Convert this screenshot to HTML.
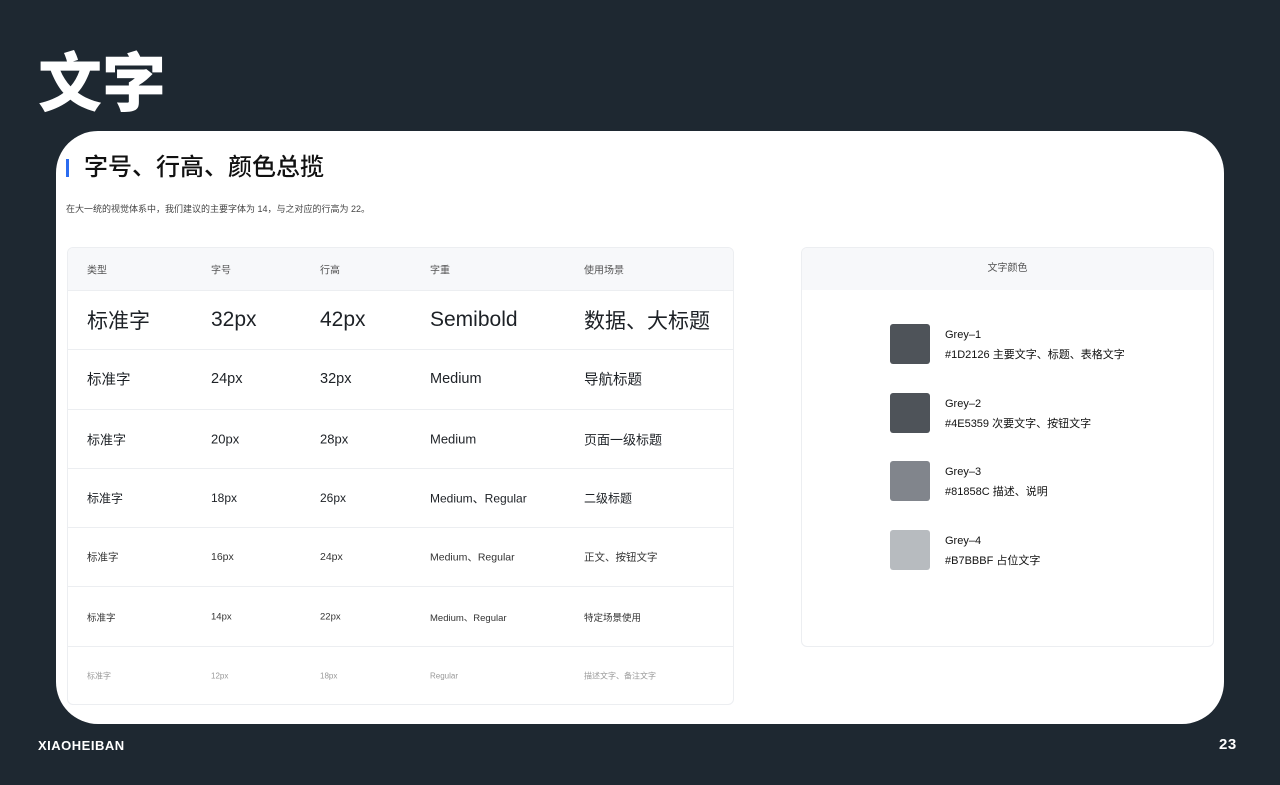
<!DOCTYPE html>
<html><head><meta charset="utf-8"><style>
*{margin:0;padding:0;box-sizing:border-box}
body{width:1280px;height:785px;background:#1e2831;position:relative;overflow:hidden;font-family:"Liberation Sans","Noto Sans CJK SC",sans-serif;color:#1d2126}
.big{position:absolute;left:38px;top:46px;font-size:64px;font-weight:900;color:#fff;letter-spacing:0px;line-height:76px}
.card{position:absolute;left:56px;top:131px;width:1168px;height:593px;background:#fff;border-radius:42px}
.t{position:absolute;left:84px;top:153px;font-size:24px;line-height:30px;color:#111;font-weight:500}
.bar{position:absolute;left:66px;top:159px;width:3px;height:18px;background:#2b6cf0}
.sub{position:absolute;left:66px;top:202px;font-size:9px;color:#444}
.tbl{position:absolute;left:67px;top:247px;width:667px;height:458px;border:1px solid #eceef1;border-radius:6px;overflow:hidden}
.hd{height:42px;background:#f7f8fa;position:relative;font-size:10px;color:#555}
.row{height:59.3px;border-top:1px solid #eceef1;position:relative}
.c{position:absolute;top:50%;transform:translateY(-50%);white-space:nowrap}
.rp{position:absolute;left:801px;top:247px;width:413px;height:400px;border:1px solid #eceef1;border-radius:6px;overflow:hidden}
.rp .hd{text-align:center;line-height:42px}
.sw{position:absolute;left:88px;width:40px;height:40px;border-radius:3px}
.sl{position:absolute;left:143px;font-size:11px;line-height:20px;color:#111}
.foot{position:absolute;top:738px;font-size:13px;font-weight:900;color:#fff;letter-spacing:0.5px}
</style></head><body>
<div class="big">文字</div>
<div class="card"></div>
<div class="bar"></div>
<div class="t">字号、行高、颜色总揽</div>
<div class="sub">在大一统的视觉体系中，我们建议的主要字体为 14，与之对应的行高为 22。</div>
<div class="tbl">
<div class="hd"><span class="c" style="left:19px">类型</span><span class="c" style="left:143px">字号</span><span class="c" style="left:252px">行高</span><span class="c" style="left:362px">字重</span><span class="c" style="left:516px">使用场景</span></div>
<div class="row" style="font-size:21px"><span class="c" style="left:19px">标准字</span><span class="c" style="left:143px">32px</span><span class="c" style="left:252px">42px</span><span class="c" style="left:362px">Semibold</span><span class="c" style="left:516px">数据、大标题</span></div>
<div class="row" style="font-size:14.5px"><span class="c" style="left:19px">标准字</span><span class="c" style="left:143px">24px</span><span class="c" style="left:252px">32px</span><span class="c" style="left:362px">Medium</span><span class="c" style="left:516px">导航标题</span></div>
<div class="row" style="font-size:13px"><span class="c" style="left:19px">标准字</span><span class="c" style="left:143px">20px</span><span class="c" style="left:252px">28px</span><span class="c" style="left:362px">Medium</span><span class="c" style="left:516px">页面一级标题</span></div>
<div class="row" style="font-size:12px"><span class="c" style="left:19px">标准字</span><span class="c" style="left:143px">18px</span><span class="c" style="left:252px">26px</span><span class="c" style="left:362px">Medium、Regular</span><span class="c" style="left:516px">二级标题</span></div>
<div class="row" style="font-size:10.5px;color:#333"><span class="c" style="left:19px">标准字</span><span class="c" style="left:143px">16px</span><span class="c" style="left:252px">24px</span><span class="c" style="left:362px">Medium、Regular</span><span class="c" style="left:516px">正文、按钮文字</span></div>
<div class="row" style="font-size:9.5px;color:#333"><span class="c" style="left:19px">标准字</span><span class="c" style="left:143px">14px</span><span class="c" style="left:252px">22px</span><span class="c" style="left:362px">Medium、Regular</span><span class="c" style="left:516px">特定场景使用</span></div>
<div class="row" style="font-size:8px;color:#999"><span class="c" style="left:19px">标准字</span><span class="c" style="left:143px">12px</span><span class="c" style="left:252px">18px</span><span class="c" style="left:362px">Regular</span><span class="c" style="left:516px">描述文字、备注文字</span></div>
</div>
<div class="rp">
<div class="hd">文字颜色</div>
<div class="sw" style="top:76px;background:#4e5359"></div><div class="sl" style="top:77px">Grey–1<br>#1D2126 主要文字、标题、表格文字</div>
<div class="sw" style="top:145px;background:#4e5359"></div><div class="sl" style="top:146px">Grey–2<br>#4E5359 次要文字、按钮文字</div>
<div class="sw" style="top:213px;background:#81858c"></div><div class="sl" style="top:214px">Grey–3<br>#81858C 描述、说明</div>
<div class="sw" style="top:282px;background:#b7bbbf"></div><div class="sl" style="top:283px">Grey–4<br>#B7BBBF 占位文字</div>
</div>
<div class="foot" style="left:38px">XIAOHEIBAN</div>
<div class="foot" style="left:1219px;font-size:15px;top:736px">23</div>
</body></html>
